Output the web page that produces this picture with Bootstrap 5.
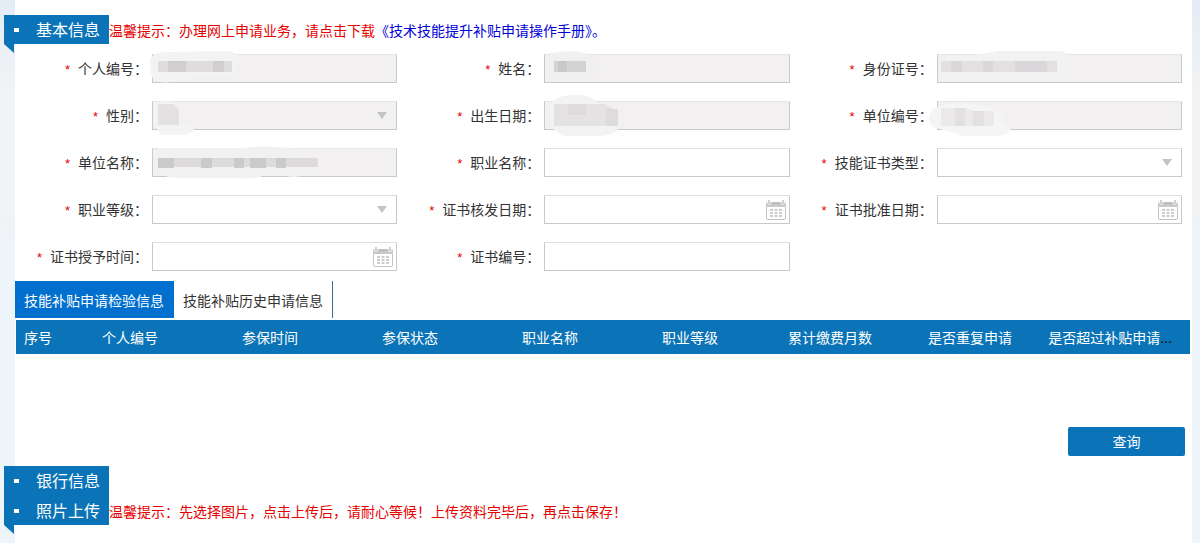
<!DOCTYPE html>
<html lang="zh-CN">
<head>
<meta charset="utf-8">
<meta name="viewport" content="width=device-width, initial-scale=1">
<title>技能提升补贴申请</title>
<link href="https://cdn.jsdelivr.net/npm/bootstrap@5.3.0/dist/css/bootstrap.min.css" rel="stylesheet">
<style>
  :root { --brand: #0b74b8; --line: #c9c9c9; }
  body {
    font: 14px/20px "Noto Sans CJK SC", sans-serif;
    color: #333;
    background: linear-gradient(#e3ecf6 0, #f2f3f4 90px, #f2f3f4 200px, #edf4fa 260px, #edf4fa 100%) no-repeat #edf4fa;
  }
  .panel { margin: 0 8px 0 15px; padding-top: 15px; min-height: 100vh; background: #fff; }
  .section-head { margin-left: -11px; }
  .tag {
    position: relative; width: 105px; height: 29px; padding-left: 32px;
    font-size: 16px; line-height: 29px; font-weight: 400; color: #fff; background: var(--brand);
  }
  .tag::before { content: ""; position: absolute; left: 10px; top: 13px; width: 5px; height: 4px; background: #fff; }
  .tag::after {
    content: ""; position: absolute; left: 0; top: 100%; width: 10px; height: 9px;
    background: var(--brand); clip-path: polygon(0 0, 100% 0, 100% 100%);
  }
  .tag.stacked { height: 30px; }
  .tag.stacked::after { display: none; }
  .tip { color: #e60000; }
  .tip a, .tip .stop { color: #0000d8; text-decoration: none; }
  .fields { padding-top: 10px; row-gap: 18px; }
  .fields > div { height: 29px; }
  .field-label { flex: 0 0 137px; padding-right: 4px; text-align: right; line-height: 28px; white-space: nowrap; }
  .field-label i { color: #e60000; font-style: normal; margin-right: 8px; font-family: "Liberation Sans", sans-serif; font-size: 13px; line-height: 1; }
  .field-box { margin-right: 10px; }
  .field-box .form-control, .field-box .form-select {
    height: 29px; padding: 0 8px; font-size: 14px; line-height: 27px;
    border: 1px solid var(--line); border-top-color: #dedede; border-radius: 0;
    background-color: #fff; background-image: none;
  }
  .field-box .form-control:disabled, .field-box .form-select:disabled { background-color: #f2f0f0; border-top-color: #e6e6e6; opacity: 1; }
  .caret {
    position: absolute; right: 10px; top: 11px; pointer-events: none;
    border: 5px solid transparent; border-top: 7px solid #c4c4c4; border-bottom: 0;
  }
  .cal { position: absolute; right: 4px; top: 5px; border: 0; padding: 0; background: none; line-height: 0; }
  .smudge { position: absolute; left: -10px; top: -10px; pointer-events: none; overflow: visible; }
  .tabs { padding-top: 10px; }
  .tabs button { height: 37px; padding: 0 9px; border: 0; border-right: 1px solid #2f6f98; font-size: 14px; color: #333; background: #fff; }
  .tabs button.active { color: #fff; background: #006fce; border-right-color: #006fce; }
  .result { table-layout: fixed; margin: 2px 2px 0 1px; width: calc(100% - 3px); }
  .result th {
    height: 34px; padding: 0 0 1px; background: var(--brand); color: #fff; font-weight: 400;
    text-align: center; white-space: nowrap;
  }
  .result .dots { color: #000; font-family: "Liberation Sans", sans-serif; line-height: 1; }
  .result td { height: 73px; }
  .c-index { width: 44px; }
  .c-rest { width: 10px; }
  .query { width: 117px; height: 29px; padding: 0; margin-right: 7px; border: 0; border-radius: 2px; font-size: 14px; color: #fff; background: var(--brand); }
  .lower { padding-top: 10px; }
</style>
</head>
<body>
<svg width="0" height="0" class="position-absolute" aria-hidden="true">
  <symbol id="calendar" viewBox="0 0 20 20">
    <rect x="0.5" y="2.5" width="19" height="17" rx="1.5" fill="#fff" stroke="#c4c4c4"/>
    <path d="M0 7V4q0-2 2-2h16q2 0 2 2v3z" fill="#c8c8c8"/>
    <path d="M3 0.500v4M17 0.500v4" stroke="#fff" stroke-width="3"/>
    <path d="M3 0v4M17 0v4" stroke="#c0c0c0" stroke-width="1.500"/>
    <path d="M6 3.500h8" stroke="#b8b8b8" stroke-width="1.500"/>
    <path d="M4 10h3M8.500 10h3M13 10h3M4 13h3M8.500 13h3M13 13h3M4 16h3M8.500 16h3M13 16h3" stroke="#ccc" stroke-width="2"/>
  </symbol>
</svg>
<main class="panel">
  <div class="section-head d-flex align-items-center">
    <h2 class="tag m-0">基本信息</h2>
    <p class="tip m-0">温馨提示：办理网上申请业务，请点击下载<a href="#">《技术技能提升补贴申请操作手册》</a><span class="stop">。</span></p>
  </div>

  <form>
    <div class="fields row gx-0">
      <div class="col-4 d-flex"><label class="field-label" for="pid"><i>*</i>个人编号：</label>
        <div class="field-box position-relative flex-grow-1"><input id="pid" class="form-control" disabled>
          <svg class="smudge" width="110" height="44"><path d="M8 16Q10 7 30 8L85 7Q98 8 98 20Q96 30 80 32Q50 32 36 37Q12 42 9 30Z" fill="#f4f3f3"/><path d="M16 17h74v11H16z" fill="#dedcdc"/><path d="M26 17h18v11H26zM71 17h11v11H71z" fill="#d0cecf"/></svg></div></div>
      <div class="col-4 d-flex"><label class="field-label" for="name"><i>*</i>姓名：</label>
        <div class="field-box position-relative flex-grow-1"><input id="name" class="form-control" disabled>
          <svg class="smudge" width="80" height="44"><path d="M16 9Q40 5 54 10Q64 16 60 32Q50 38 38 35Q20 34 16 30Z" fill="#f1f0f0"/><path d="M20 17h32v11H20z" fill="#d4d3d3"/><path d="M24 17h9v11H24z" fill="#cac9c9"/></svg></div></div>
      <div class="col-4 d-flex"><label class="field-label" for="idno"><i>*</i>身份证号：</label>
        <div class="field-box position-relative flex-grow-1"><input id="idno" class="form-control" disabled>
          <svg class="smudge" width="150" height="44"><path d="M14 14Q60 10 70 7H136Q146 14 144 24Q136 36 124 38H100Q60 34 52 38H20Q12 30 14 14Z" fill="#f3f2f2"/><path d="M14 17h116v11H14z" fill="#e2e0e1"/><path d="M24 17h11v11H24zM56 17h10v11H56zM88 17h32v11H88z" fill="#d9d7d9"/></svg></div></div>

      <div class="col-4 d-flex"><label class="field-label" for="sex"><i>*</i>性别：</label>
        <div class="field-box position-relative flex-grow-1"><select id="sex" class="form-select" disabled><option></option></select><span class="caret"></span>
          <svg class="smudge" width="60" height="46"><path d="M12 12Q34 6 38 18V33Q50 32 52 38Q50 44 36 44H20Q10 36 12 12Z" fill="#f5f4f4"/><path d="M16 13h16l5 5v16H16z" fill="#e3e1e2"/></svg></div></div>
      <div class="col-4 d-flex"><label class="field-label" for="birth"><i>*</i>出生日期：</label>
        <div class="field-box position-relative flex-grow-1"><input id="birth" class="form-control" disabled>
          <svg class="smudge" width="90" height="46"><path d="M16 12Q28 2 46 4Q58 5 62 11L84 20V38Q80 44 66 45H30Q20 40 18 36Z" fill="#f4f3f3"/><path d="M20 13h50l14 7v15H20z" fill="#e4e2e3"/><path d="M34 13h18v11H34zM72 18h12v17H72z" fill="#dddbdc"/></svg></div></div>
      <div class="col-4 d-flex"><label class="field-label" for="unitno"><i>*</i>单位编号：</label>
        <div class="field-box position-relative flex-grow-1"><input id="unitno" class="form-control" disabled>
          <svg class="smudge" width="90" height="46"><path d="M6 18Q20 11 42 13Q66 14 74 24Q74 34 84 38Q80 45 68 45H36Q20 40 6 36Q-2 28 6 18Z" fill="#f6f5f5"/><path d="M14 17h24l8 3h21v15H14z" fill="#ebe9ea"/><path d="M28 17h10v18H28zM46 20h11v15H46z" fill="#e2e0e2"/></svg></div></div>

      <div class="col-4 d-flex"><label class="field-label" for="unit"><i>*</i>单位名称：</label>
        <div class="field-box position-relative flex-grow-1"><input id="unit" class="form-control" disabled>
          <svg class="smudge" width="180" height="46"><path d="M16 10H100Q130 6 160 12Q172 24 166 34Q158 41 144 38L126 36Q112 42 98 40H34Q16 38 14 30Z" fill="#f2f1f1"/><path d="M16 20h158q2 0 2 3v6H16z" fill="#dcdadb"/><path d="M16 20h16v10H16zM59 20h11v10H59zM92 20h10v10H92zM108 20h16v10H108zM134 20h10v10H134z" fill="#cbcaca"/></svg></div></div>
      <div class="col-4 d-flex"><label class="field-label" for="job"><i>*</i>职业名称：</label>
        <div class="field-box position-relative flex-grow-1"><input id="job" class="form-control"></div></div>
      <div class="col-4 d-flex"><label class="field-label" for="ctype"><i>*</i>技能证书类型：</label>
        <div class="field-box position-relative flex-grow-1"><select id="ctype" class="form-select"><option></option></select><span class="caret"></span></div></div>

      <div class="col-4 d-flex"><label class="field-label" for="level"><i>*</i>职业等级：</label>
        <div class="field-box position-relative flex-grow-1"><select id="level" class="form-select"><option></option></select><span class="caret"></span></div></div>
      <div class="col-4 d-flex"><label class="field-label" for="issued"><i>*</i>证书核发日期：</label>
        <div class="field-box position-relative flex-grow-1"><input id="issued" class="form-control"><button type="button" class="cal" aria-label="选择日期"><svg width="20" height="20"><use href="#calendar"/></svg></button></div></div>
      <div class="col-4 d-flex"><label class="field-label" for="approved"><i>*</i>证书批准日期：</label>
        <div class="field-box position-relative flex-grow-1"><input id="approved" class="form-control"><button type="button" class="cal" aria-label="选择日期"><svg width="20" height="20"><use href="#calendar"/></svg></button></div></div>

      <div class="col-4 d-flex"><label class="field-label" for="granted"><i>*</i>证书授予时间：</label>
        <div class="field-box position-relative flex-grow-1"><input id="granted" class="form-control"><button type="button" class="cal" aria-label="选择日期"><svg width="20" height="20"><use href="#calendar"/></svg></button></div></div>
      <div class="col-4 d-flex"><label class="field-label" for="certno"><i>*</i>证书编号：</label>
        <div class="field-box position-relative flex-grow-1"><input id="certno" class="form-control"></div></div>
    </div>
  </form>

  <div class="tabs d-flex" role="tablist">
    <button type="button" role="tab" class="active" aria-selected="true">技能补贴申请检验信息</button>
    <button type="button" role="tab" aria-selected="false">技能补贴历史申请信息</button>
  </div>
  <table class="result">
    <colgroup><col class="c-index"><col span="8"><col class="c-rest"></colgroup>
    <thead><tr>
      <th>序号</th><th>个人编号</th><th>参保时间</th><th>参保状态</th><th>职业名称</th><th>职业等级</th><th>累计缴费月数</th><th>是否重复申请</th><th>是否超过补贴申请<span class="dots">...</span></th><th></th>
    </tr></thead>
    <tbody><tr><td colspan="10"></td></tr></tbody>
  </table>
  <div class="d-flex justify-content-end"><button type="button" class="query btn">查询</button></div>

  <div class="lower">
    <div class="section-head"><h2 class="tag stacked m-0">银行信息</h2></div>
    <div class="section-head d-flex align-items-center">
      <h2 class="tag m-0">照片上传</h2>
      <p class="tip m-0">温馨提示：先选择图片，点击上传后，请耐心等候！上传资料完毕后，再点击保存！</p>
    </div>
  </div>
</main>
<script src="https://cdn.jsdelivr.net/npm/bootstrap@5.3.0/dist/js/bootstrap.bundle.min.js"></script>
</body>
</html>
